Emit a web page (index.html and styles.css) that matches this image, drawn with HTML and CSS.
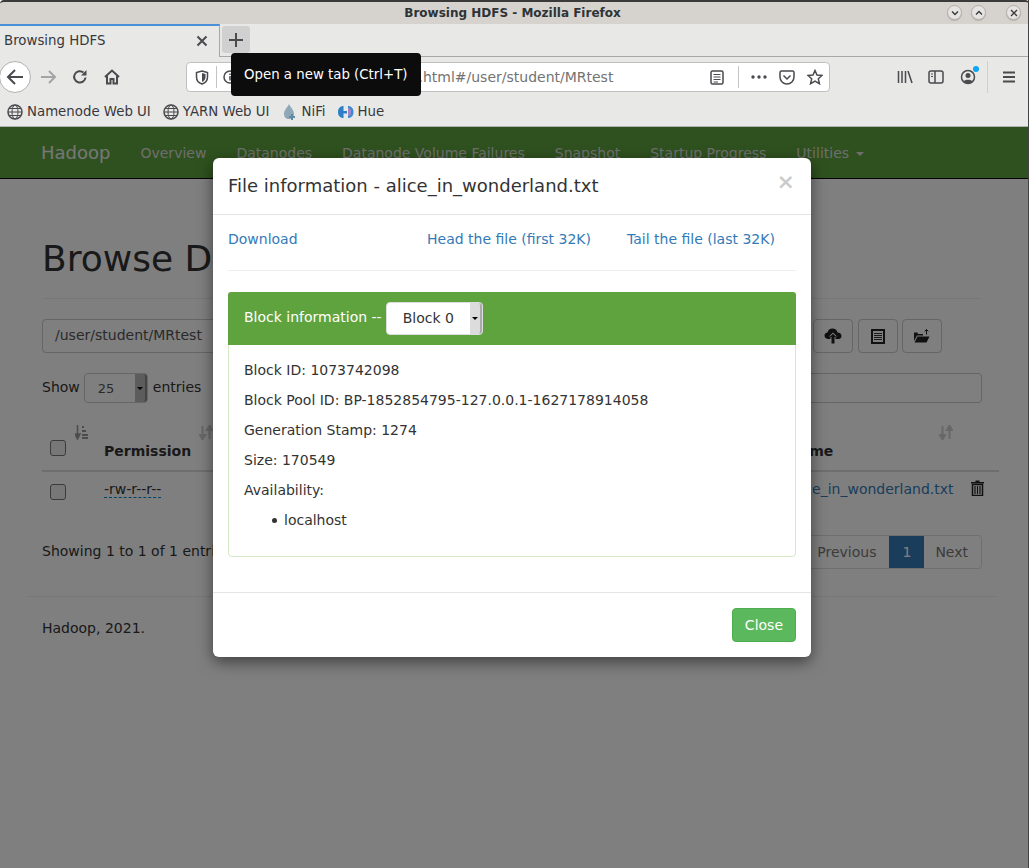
FILE: index.html
```html
<!DOCTYPE html>
<html lang="en">
<head>
  <meta charset="UTF-8">
  <title>Browsing HDFS - Mozilla Firefox</title>
  <link rel="stylesheet" href="styles.css">
</head>
<body>
  <!-- Window title bar -->
  <div class="titlebar">
    <span class="title">Browsing HDFS - Mozilla Firefox</span>
    <div class="win-buttons">
      <span class="win-btn"><svg width="8" height="8" viewBox="0 0 8 8"><path d="M1 2.500 4 5.500 7 2.500" class="win-ico"/></svg></span>
      <span class="win-btn"><svg width="8" height="8" viewBox="0 0 8 8"><path d="M1 5.500 4 2.500 7 5.500" class="win-ico"/></svg></span>
      <span class="win-btn win-close"><svg width="8" height="8" viewBox="0 0 8 8"><path d="M1 1 7 7M7 1 1 7" class="win-ico"/></svg></span>
    </div>
  </div>

  <!-- Tabs -->
  <div class="tabbar">
    <div class="tab">
      <span>Browsing HDFS</span>
      <svg width="12" height="12" viewBox="0 0 12 12"><path d="M1.500 1.500 10.500 10.500M10.500 1.500 1.500 10.500" class="ico"/></svg>
    </div>
    <div class="newtab">
      <svg width="14" height="14" viewBox="0 0 14 14"><path d="M7 0V14M0 7H14" class="ico"/></svg>
    </div>
  </div>

  <!-- Toolbar -->
  <div class="toolbar">
    <div class="nav-btns">
      <span class="back"><svg width="18" height="18" viewBox="0 0 18 18"><path d="M17 9H2M9 2 2 9 9 16" class="ico"/></svg></span>
      <span class="nav-btn"><svg width="17" height="16" viewBox="0 0 17 16"><path d="M1 8H15M9 2 15 8 9 14" class="ico faint"/></svg></span>
      <span class="nav-btn"><svg width="16" height="16" viewBox="0 0 16 16"><path d="M13.500 8.500A5.700 5.700 0 1 1 11.500 3.500" class="ico"/><path d="M14.500 1V6.500H9z" class="solid"/></svg></span>
      <span class="nav-btn"><svg width="16" height="16" viewBox="0 0 16 16"><path d="M1 8 8 1.500 15 8M3 7V14.500H6.500V10H9.500V14.500H13V7" class="ico"/></svg></span>
    </div>
    <div class="urlbar">
      <svg class="shield" width="14" height="15" viewBox="0 0 14 15"><path d="M7 1 12.500 2.500V7C12.500 10.500 10 13 7 14 4 13 1.500 10.500 1.500 7V2.500Z" class="ico thin"/><path d="M7 3 10.500 4V7C10.500 9.500 9 11 7 12Z" class="solid"/></svg>
      <span class="url-sep"></span>
      <svg class="info" width="14" height="14" viewBox="0 0 14 14"><circle cx="7" cy="7" r="6" class="ico thin"/><path d="M7 6V10.500M7 3.500V5" class="ico thin"/></svg>
      <span class="url"><b>localhost</b>:9870/explorer.html#/user/student/MRtest</span>
      <div class="url-actions">
        <svg class="reader" width="14" height="15" viewBox="0 0 14 15"><rect x="1" y="1" width="12" height="13" rx="1.500" class="ico thin"/><path d="M3.500 4.500H10.500M3.500 7H10.500M3.500 9.500H10.500M3.500 12H8" class="ico hair"/></svg>
        <span class="url-sep tall"></span>
        <svg width="16" height="4" viewBox="0 0 16 4"><circle cx="2" cy="2" r="1.700" class="solid"/><circle cx="8" cy="2" r="1.700" class="solid"/><circle cx="14" cy="2" r="1.700" class="solid"/></svg>
        <svg width="16" height="15" viewBox="0 0 16 15"><path d="M1 2.500A1.500 1.500 0 0 1 2.500 1H13.500A1.500 1.500 0 0 1 15 2.500V7A7 7 0 0 1 1 7Z" class="ico thin"/><path d="M4.500 5.500 8 9 11.500 5.500" class="ico thin"/></svg>
        <svg width="16" height="16" viewBox="0 0 16 16"><path d="M8 1.500 10 6 15 6.500 11.300 9.800 12.400 14.700 8 12.100 3.600 14.700 4.700 9.800 1 6.500 6 6Z" class="ico thin"/></svg>
      </div>
    </div>
    <div class="tool-icons">
      <svg width="16" height="14" viewBox="0 0 16 14"><path d="M1.500 1V13M5 1V13M8.500 1V13M11 1 15 13" class="ico thin"/></svg>
      <svg width="16" height="14" viewBox="0 0 16 14"><rect x="1" y="1" width="14" height="12" rx="2" class="ico thin"/><path d="M7 1V13" class="ico thin"/><path d="M3 4H5M3 6.500H5" class="ico hair"/></svg>
      <span class="account">
        <svg width="16" height="16" viewBox="0 0 16 16"><circle cx="8" cy="8" r="6.500" class="ico thin"/><circle cx="8" cy="6.500" r="2.500" class="solid"/><path d="M3.500 12.500C4.500 10 11.500 10 12.500 12.500 10 14.800 6 14.800 3.500 12.500Z" class="solid"/></svg>
        <i class="dot"></i>
      </span>
      <span class="tool-sep"></span>
      <svg class="menu" width="14" height="12" viewBox="0 0 14 12"><path d="M1 1.500H13M1 6H13M1 10.500H13" class="ico"/></svg>
    </div>
  </div>

  <!-- Bookmarks -->
  <div class="bookmarks">
    <span class="bm"><svg width="16" height="16" viewBox="0 0 16 16"><circle cx="8" cy="8" r="7" class="ico thin"/><ellipse cx="8" cy="8" rx="3" ry="7" class="ico hair"/><path d="M1 8H15M2 4.500H14M2 11.500H14" class="ico hair"/></svg>Namenode Web UI</span>
    <span class="bm"><svg width="16" height="16" viewBox="0 0 16 16"><circle cx="8" cy="8" r="7" class="ico thin"/><ellipse cx="8" cy="8" rx="3" ry="7" class="ico hair"/><path d="M1 8H15M2 4.500H14M2 11.500H14" class="ico hair"/></svg>YARN Web UI</span>
    <span class="bm bm-nifi"><svg width="14" height="16" viewBox="0 0 14 16"><path d="M6 0C8 4 11 6 11 10 11 13 9 15 6 15 3 15 1 13 1 10 1 6 4 4 6 0Z" fill="#8fa8b8"/><path d="M8 10H10V12H12V14H10V16H8V14H6V12H8Z" fill="#5f8aa6"/></svg>NiFi</span>
    <span class="bm"><svg width="16" height="14" viewBox="0 0 16 14"><path d="M5.500 1C2 1 0 3.500 0 7 0 10.500 2 13 5.500 13V8.500H9V6H5.500Z" fill="#2f7fc8"/><path d="M10 1V13C13.500 13 15.500 10.500 15.500 7 15.500 3.500 13.500 1 10 1Z" fill="#3d8ad0"/><path d="M10 3V11C12 11 13 9.500 13 7 13 4.500 12 3 10 3Z" fill="#a685c9"/></svg>Hue</span>
  </div>

  <!-- Page content behind the dialog -->
  <div class="page">
    <nav class="navbar">
      <span class="brand">Hadoop</span>
      <span class="nav-link">Overview</span>
      <span class="nav-link">Datanodes</span>
      <span class="nav-link">Datanode Volume Failures</span>
      <span class="nav-link">Snapshot</span>
      <span class="nav-link">Startup Progress</span>
      <span class="nav-link">Utilities <i class="caret"></i></span>
    </nav>

    <div class="container">
      <h1>Browse Directory</h1>
      <div class="path-row">
        <div class="path-input">/user/student/MRtest</div>
        <span class="icon-btn"><svg width="18" height="16" viewBox="0 0 18 16"><path d="M4.500 11C2 11 .500 9.500 .500 7.500S2 4.500 3.500 4.500C4 2 6 .500 8.500 .500 11 .500 13 2 13.500 4.500 15.500 4.500 17.500 5.500 17.500 8S15.500 11 13.500 11H11.500V8.500H13L9 4.500 5 8.500H6.500V11Z" class="solid-dark"/><path d="M7.500 15.500V9H5.800L9 5.800 12.200 9H10.500V15.500Z" class="solid-dark"/></svg></span>
        <span class="icon-btn"><svg width="14" height="15" viewBox="0 0 14 15"><rect x="1" y="1" width="12" height="13" fill="none" stroke="#222" stroke-width="2"/><path d="M3 4.500H11M3 6.500H11M3 8.500H11M3 10.500H11" stroke="#333" stroke-width="1" fill="none"/></svg></span>
        <span class="icon-btn"><svg width="16" height="14" viewBox="0 0 16 14"><path d="M0 3.500H3L4.500 5H9V6.500H3L0 12Z" class="solid-dark"/><path d="M3.500 7.500H15.500L12.500 13.500H.500Z" class="solid-dark"/><path d="M12.500 .500V5.500M10.700 2.300 12.500 .500 14.300 2.300" stroke="#222" stroke-width="1" fill="none"/></svg></span>
      </div>

      <div class="filter-row">
        <label class="show">Show
          <span class="select-box">25<span class="select-arrow"><i class="caret small"></i></span></span>
          entries</label>
        <div class="search-box"></div>
      </div>

      <div class="table-head">
        <div class="col-check">
          <svg class="sort" width="14" height="15" viewBox="0 0 14 15"><path d="M2.500 0V10M0 9 2.500 14 5 9Z" class="sort-dark"/><path d="M7 1H9V3H7ZM7 5H11V7H7ZM7 9H13V11H7ZM7 12H13V14H7Z" fill="#999"/></svg>
          <span class="checkbox"></span>
        </div>
        <div class="col-perm">
          <svg class="sort" width="14" height="15" viewBox="0 0 14 15"><path d="M3.500 1V14M1 10 3.500 14.500 6 10ZM10.500 14V1M8 5 10.500 .500 13 5Z" class="sort-faint"/></svg>
          <b>Permission</b>
        </div>
        <div class="col-name">
          <svg class="sort" width="14" height="15" viewBox="0 0 14 15"><path d="M3.500 1V14M1 10 3.500 14.500 6 10ZM10.500 14V1M8 5 10.500 .500 13 5Z" class="sort-faint"/></svg>
          <b>Name</b>
        </div>
        <div class="col-del"></div>
      </div>
      <div class="table-row">
        <div class="col-check"><span class="checkbox"></span></div>
        <div class="col-perm"><span class="perm">-rw-r--r--</span></div>
        <div class="col-name"><span class="file-link">alice_in_wonderland.txt</span></div>
        <div class="col-del">
          <svg width="13" height="16" viewBox="0 0 13 16"><path d="M4.500 .500H8.500V2H13V3.500H0V2H4.500Z" class="solid-dark"/><path d="M1.500 4.500H11.500V15.500H1.500Z" fill="none" stroke="#222" stroke-width="1.500"/><path d="M4 6V14M6.500 6V14M9 6V14" stroke="#222" stroke-width="1.200" fill="none"/></svg>
        </div>
      </div>

      <div class="table-foot">
        <span class="foot-info">Showing 1 to 1 of 1 entries</span>
        <div class="pager">
          <span class="page-item">Previous</span>
          <span class="page-item current">1</span>
          <span class="page-item">Next</span>
        </div>
      </div>
    </div>

    <footer class="page-footer">Hadoop, 2021.</footer>

    <!-- Dialog -->
    <div class="backdrop"></div>
    <div class="modal">
      <div class="modal-header">
        <span class="modal-title">File information - alice_in_wonderland.txt</span>
        <span class="modal-x">×</span>
      </div>
      <div class="modal-body">
        <div class="file-links">
          <a class="dl">Download</a>
          <a class="head">Head the file (first 32K)</a>
          <a class="tail">Tail the file (last 32K)</a>
        </div>
        <div class="panel">
          <div class="panel-heading">
            <span class="panel-title">Block information --</span>
            <span class="block-select">Block 0<span class="select-arrow light"><i class="caret small"></i></span></span>
          </div>
          <div class="panel-body">
            <p>Block ID: 1073742098</p>
            <p>Block Pool ID: BP-1852854795-127.0.0.1-1627178914058</p>
            <p>Generation Stamp: 1274</p>
            <p>Size: 170549</p>
            <p>Availability:</p>
            <ul><li>localhost</li></ul>
          </div>
        </div>
      </div>
      <div class="modal-footer"><span class="btn-close">Close</span></div>
    </div>
  </div>

  <!-- New tab tooltip -->
  <div class="tooltip">Open a new tab (Ctrl+T)</div>
</body>
</html>
```

FILE: styles.css
```css
* {
  margin: 0;
  padding: 0;
  box-sizing: border-box;
}

html, body {
  height: 868px;
  overflow: hidden;
}

body {
  font-family: 'DejaVu Sans', sans-serif;
  font-size: 14px;
  color: #333;
  background: #fff;
  display: flex;
  flex-direction: column;
  position: relative;
}

/* dark window edge on the right */
body::after {
  content: '';
  position: absolute;
  top: 0;
  right: 0;
  bottom: 0;
  width: 1px;
  background: #444;
}

/* Shared icon strokes */
.ico {
  fill: none;
  stroke: #4a4a4f;
  stroke-width: 2;
}
.ico.thin { stroke-width: 1.500; }
.ico.hair { stroke-width: 1; }
.ico.faint { stroke: #a4a4a6; }
.solid { fill: #4a4a4f; }
.solid-dark { fill: #222; }
.sort-dark { fill: #999; stroke: #999; stroke-width: 1.500; }
.sort-faint { fill: #d0d0d0; stroke: #d0d0d0; stroke-width: 2; }
.win-ico {
  fill: none;
  stroke: #3a3a3a;
  stroke-width: 1.400;
}

/* Title bar */
.titlebar {
  height: 24px;
  flex: none;
  background: #d6d2ce;
  border-top: 2px solid #3a3a3a;
  border-radius: 4px 4px 0 0;
  position: relative;
  display: flex;
  align-items: center;
  justify-content: center;
}

.title {
  font-size: 12px;
  font-weight: bold;
  color: #2e3436;
  margin-left: -4px;
}

.win-buttons {
  position: absolute;
  right: 8px;
  top: 3px;
  display: flex;
}

.win-btn {
  width: 15px;
  height: 15px;
  margin-left: 9px;
  border-radius: 50%;
  background: #e6e4e2;
  border: 1px solid #b3afab;
  box-shadow: 0 1px 1px rgba(0, 0, 0, 0.15);
  display: flex;
  align-items: center;
  justify-content: center;
}

.win-close { margin-left: 20px; }

/* Tabs */
.tabbar {
  height: 33px;
  flex: none;
  background: #e8e8e7;
  border-bottom: 1px solid #a8a8a8;
  display: flex;
}

.tab {
  width: 220px;
  height: 33px;
  background: #e8e8e7;
  border-top: 2px solid #4a90d9;
  border-right: 1px solid #a8a8a8;
  padding: 0 11px 2px 4px;
  display: flex;
  align-items: center;
  justify-content: space-between;
  color: #38383d;
  font-size: 13.330px;
  position: relative;
  z-index: 1;
}

.newtab {
  width: 28px;
  height: 27px;
  margin: 2px 0 0 2px;
  background: #d0d0d0;
  border-radius: 3px;
  display: flex;
  align-items: center;
  justify-content: center;
}

/* Toolbar */
.toolbar {
  height: 40px;
  flex: none;
  background: #e8e8e7;
  display: flex;
  align-items: center;
}

.nav-btns {
  width: 186px;
  display: flex;
  align-items: center;
}

.back {
  width: 32px;
  height: 32px;
  margin-left: -1px;
  margin-right: 1px;
  border-radius: 50%;
  background: #fff;
  border: 1px solid #b1b1b1;
  display: flex;
  align-items: center;
  justify-content: center;
}

.nav-btn {
  width: 32px;
  display: flex;
  justify-content: center;
}

.urlbar {
  width: 644px;
  height: 30px;
  background: #fff;
  border: 1px solid #c0c0c0;
  border-radius: 4px;
  display: flex;
  align-items: center;
  padding-left: 8px;
  color: #737373;
  white-space: nowrap;
}

.url-sep {
  width: 1px;
  height: 22px;
  background: #c4c4c4;
  margin: 0 6px 0 7px;
}

.url-sep.tall { margin: 0; }

.url {
  margin-left: 17px;
  font-size: 14px;
}

.url b {
  font-weight: normal;
  color: #333;
}

.url-actions {
  margin-left: auto;
  padding-right: 6px;
  display: flex;
  align-items: center;
  gap: 12px;
}

.reader { margin-right: 2px; }

.tool-icons {
  flex: 1;
  display: flex;
  align-items: center;
  padding-left: 67px;
  gap: 15px;
}

.account {
  position: relative;
  display: flex;
  margin-left: 1px;
}

.dot {
  position: absolute;
  top: -3px;
  right: -3px;
  width: 6px;
  height: 6px;
  border-radius: 50%;
  background: #0fa5f5;
}

.tool-sep {
  width: 1px;
  height: 32px;
  background: #d0d0d0;
  margin-left: -4px;
}

.menu { margin-left: -1px; }

/* Bookmarks */
.bookmarks {
  height: 30px;
  flex: none;
  background: #e8e8e7;
  border-bottom: 1px solid #b0b0b0;
  padding-left: 7px;
  display: flex;
  align-items: center;
  gap: 12px;
  font-size: 13.330px;
  color: #38383d;
}

.bm {
  display: flex;
  align-items: center;
  gap: 4px;
}

.bm-nifi { margin-left: 2px; }

/* Page */
.page {
  flex: 1;
  position: relative;
  background: #fff;
  overflow: hidden;
}

.navbar {
  height: 52px;
  background: #5fa33e;
  border-bottom: 1px solid #000;
  padding-left: 41px;
  display: flex;
  align-items: center;
  color: #ddd;
}

.brand {
  font-size: 18px;
  margin-right: 30px;
  color: #eee;
}

.nav-link {
  margin-right: 30px;
  font-size: 14px;
  white-space: nowrap;
}

.caret {
  display: inline-block;
  border-top: 4px solid currentColor;
  border-left: 4px solid transparent;
  border-right: 4px solid transparent;
  vertical-align: middle;
  margin-left: 2px;
}

.caret.small {
  border-width: 3px 3px 0;
  margin: 0;
}

.container {
  padding: 0 47px 0 42px;
}

h1 {
  font-size: 36px;
  font-weight: 500;
  line-height: 40px;
  margin-top: 60px;
  padding-bottom: 19px;
  border-bottom: 1px solid #eee;
  color: #333;
  white-space: nowrap;
}

.path-row {
  margin-top: 20px;
  margin-right: 40px;
  display: flex;
  gap: 5px;
}

.path-input {
  flex: 1;
  height: 34px;
  margin-right: 25px;
  padding: 5px 12px;
  border: 1px solid #ccc;
  border-radius: 4px;
  color: #555;
  line-height: 20px;
}

.icon-btn {
  width: 40px;
  height: 34px;
  border: 1px solid #ccc;
  border-radius: 4px;
  display: flex;
  align-items: center;
  justify-content: center;
}

.icon-btn:last-child { margin-left: -1px; }

.filter-row {
  margin-top: 20px;
  display: flex;
  justify-content: space-between;
  align-items: flex-start;
}

.show {
  display: flex;
  align-items: flex-start;
  line-height: 29px;
  gap: 5px;
}

.select-box {
  width: 64px;
  height: 30px;
  margin-left: -1px;
  border: 1px solid #ccc;
  border-radius: 4px;
  font-size: 13px;
  padding-left: 13px;
  display: flex;
  align-items: center;
  position: relative;
  color: #555;
}

.select-arrow {
  position: absolute;
  right: 0;
  top: 0;
  bottom: 0;
  width: 12px;
  background: #b8b8b8;
  border-right: 2px solid #888;
  border-radius: 0 3px 3px 0;
  color: #000;
  display: flex;
  align-items: center;
  justify-content: center;
}

.select-arrow.light {
  background: #dcdcdc;
  border-right-color: #aaa;
}

.search-box {
  width: 500px;
  height: 30px;
  border: 1px solid #ccc;
  border-radius: 4px;
}

.table-head,
.table-row {
  display: flex;
  margin-right: -17px;
}

.table-head {
  height: 50px;
  margin-top: 19px;
  border-bottom: 2px solid #ddd;
  align-items: flex-end;
}

.table-row {
  height: 38px;
  align-items: center;
}

.col-check {
  width: 62px;
  padding-left: 8px;
  position: relative;
  align-self: stretch;
  display: flex;
  align-items: center;
}

.table-row .col-check { padding-top: 2px; }
.table-row .col-perm,
.table-row .col-name { padding-bottom: 4px; }

.table-head .col-check { align-items: flex-end; padding-bottom: 14px; }

.col-perm {
  width: 684px;
  position: relative;
}

.table-head .col-perm,
.table-head .col-name {
  padding-bottom: 11px;
  align-self: stretch;
  display: flex;
  align-items: flex-end;
}

.col-name {
  flex: 1;
  position: relative;
}

.col-del {
  width: 44px;
  display: flex;
  justify-content: center;
  padding-bottom: 6px;
}

.sort {
  position: absolute;
  top: 3px;
}

.col-check .sort { left: 33px; }
.col-perm .sort { left: 95px; }
.col-name .sort { right: 2px; }

.checkbox {
  width: 16px;
  height: 16px;
  border: 1px solid #767676;
  border-radius: 3px;
  background: #efefef;
}

.perm {
  border-bottom: 1px dashed #08c;
}

.file-link { color: #337ab7; }

.table-foot {
  margin-top: 25px;
  display: flex;
  justify-content: space-between;
  align-items: center;
}

.foot-info { padding-bottom: 2px; }

.pager {
  display: flex;
  height: 34px;
  border: 1px solid #ddd;
  border-radius: 4px;
  overflow: hidden;
}

.page-item {
  padding: 0 12px;
  line-height: 32px;
  color: #777;
}

.page-item.current {
  background: #337ab7;
  color: #fff;
  padding: 0 13px;
  margin-left: 1px;
}

.page-item.current + .page-item { padding: 0 13px 0 11px; }

.page-footer {
  margin: 27px 32px 0 28px;
  padding: 23px 14px;
  border-top: 1px solid #eee;
}

/* Dialog */
.backdrop {
  position: absolute;
  inset: 0;
  background: #000;
  opacity: 0.500;
}

.modal {
  position: absolute;
  left: 213px;
  top: 31px;
  width: 598px;
  background: #fff;
  border-radius: 6px;
  box-shadow: 0 5px 15px rgba(0, 0, 0, 0.500);
}

.modal-header {
  height: 57px;
  padding: 0 15px;
  border-bottom: 1px solid #e5e5e5;
  display: flex;
  justify-content: space-between;
  align-items: center;
}

.modal-title {
  font-size: 18px;
  margin-bottom: 2px;
}

.modal-x {
  font-size: 22px;
  line-height: 30px;
  font-weight: bold;
  color: #000;
  opacity: 0.200;
  margin: -8px 1px 0 0;
}

.modal-body {
  padding: 15px;
}

.file-links {
  height: 41px;
  padding-top: 1px;
  border-bottom: 1px solid #eee;
  display: flex;
  color: #337ab7;
}

.dl { width: 199px; }
.head { width: 200px; }

.panel {
  margin-top: 21px;
  margin-bottom: 20px;
  border: 1px solid #d6e9c6;
  border-radius: 4px;
}

.panel-heading {
  height: 53px;
  background: #5fa33e;
  color: #fff;
  padding: 0 16px;
  margin: -1px -1px 0;
  border-radius: 3px 3px 0 0;
  display: flex;
  align-items: center;
  gap: 4px;
}

.panel-title { margin-bottom: 4px; }

.block-select {
  width: 97px;
  height: 33px;
  background: #fff;
  color: #333;
  border: 1px solid #ddd;
  border-radius: 4px;
  padding: 0 0 2px 16px;
  display: flex;
  align-items: center;
  position: relative;
}

.panel-body {
  padding: 15px 15px 16px;
}

.panel-body p {
  line-height: 20px;
  margin-bottom: 10px;
}

.panel-body ul {
  list-style: none;
  padding-left: 40px;
  line-height: 20px;
  margin-bottom: 10px;
}

.panel-body li {
  position: relative;
}

/* round list bullet, a bit bigger than the default marker */
.panel-body li::before {
  content: '';
  position: absolute;
  left: -12px;
  top: 8px;
  width: 5px;
  height: 5px;
  border-radius: 50%;
  background: #333;
}

.modal-footer {
  padding: 15px;
  border-top: 1px solid #e5e5e5;
  display: flex;
  justify-content: flex-end;
}

.btn-close {
  height: 34px;
  padding: 0 12px;
  line-height: 32px;
  border: 1px solid #4cae4c;
  border-radius: 4px;
  background: #5cb85c;
  color: #fff;
}

/* Tooltip */
.tooltip {
  position: absolute;
  left: 231px;
  top: 53px;
  width: 190px;
  height: 43px;
  background: #0c0c0d;
  border-radius: 4px;
  color: #fff;
  font-size: 13.330px;
  padding-left: 13px;
  display: flex;
  align-items: center;
  white-space: nowrap;
}
```
